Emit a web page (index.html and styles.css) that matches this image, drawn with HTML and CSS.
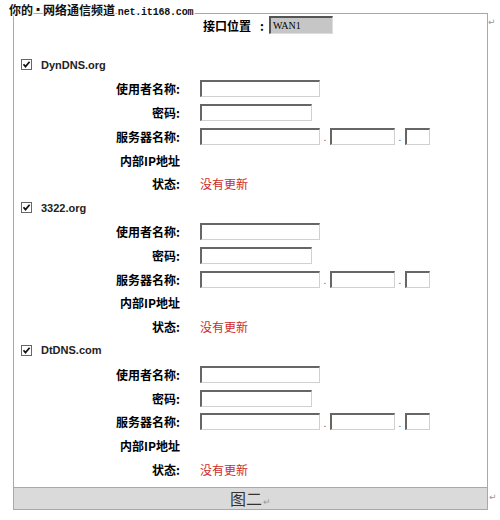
FILE: index.html
```html
<!DOCTYPE html>
<html lang="zh-CN">
<head>
    <meta charset="UTF-8">
    <title>动态域名设置</title>
    <link rel="stylesheet" href="styles.css">
</head>
<body>
    <div class="mark">你的<span class="dot">·</span>网络通信频道 <span class="site">net.it168.com</span></div>
    <span class="para para-top">↵</span>

    <div class="frame">
        <div class="top-row">
            <span class="top-label">接口位置</span>
            <span class="colon">:</span>
            <span class="iface">WAN1</span>
        </div>

        <div class="section">
            <div class="head">
                <svg class="check" width="11" height="11" viewBox="0 0 11 11"><rect x="0.5" y="0.5" width="10" height="10" fill="#fff" stroke="#666"/><path d="M2.5 5.2 L4.5 7.6 L8.6 2.8" fill="none" stroke="#111" stroke-width="1.7"/></svg>
                <span>DynDNS.org</span>
            </div>
            <div class="row"><label>使用者名称:</label><span class="field wide"></span></div>
            <div class="row"><label>密码:</label><span class="field pass"></span></div>
            <div class="row"><label>服务器名称:</label><span class="field wide"></span><i>.</i><span class="field mid"></span><i>.</i><span class="field tiny"></span></div>
            <div class="row"><label>内部IP地址</label></div>
            <div class="row"><label>状态:</label><span class="state">没有更新</span></div>
        </div>

        <div class="section">
            <div class="head">
                <svg class="check" width="11" height="11" viewBox="0 0 11 11"><rect x="0.5" y="0.5" width="10" height="10" fill="#fff" stroke="#666"/><path d="M2.5 5.2 L4.5 7.6 L8.6 2.8" fill="none" stroke="#111" stroke-width="1.7"/></svg>
                <span>3322.org</span>
            </div>
            <div class="row"><label>使用者名称:</label><span class="field wide"></span></div>
            <div class="row"><label>密码:</label><span class="field pass"></span></div>
            <div class="row"><label>服务器名称:</label><span class="field wide"></span><i>.</i><span class="field mid"></span><i>.</i><span class="field tiny"></span></div>
            <div class="row"><label>内部IP地址</label></div>
            <div class="row"><label>状态:</label><span class="state">没有更新</span></div>
        </div>

        <div class="section">
            <div class="head">
                <svg class="check" width="11" height="11" viewBox="0 0 11 11"><rect x="0.5" y="0.5" width="10" height="10" fill="#fff" stroke="#666"/><path d="M2.5 5.2 L4.5 7.6 L8.6 2.8" fill="none" stroke="#111" stroke-width="1.7"/></svg>
                <span>DtDNS.com</span>
            </div>
            <div class="row"><label>使用者名称:</label><span class="field wide"></span></div>
            <div class="row"><label>密码:</label><span class="field pass"></span></div>
            <div class="row"><label>服务器名称:</label><span class="field wide"></span><i>.</i><span class="field mid"></span><i>.</i><span class="field tiny"></span></div>
            <div class="row"><label>内部IP地址</label></div>
            <div class="row"><label>状态:</label><span class="state">没有更新</span></div>
        </div>

        <div class="caption">图二<span class="para-in">↵</span></div>
    </div>
    <span class="para para-bottom">↵</span>
</body>
</html>
```
FILE: styles.css
```css
body {
    margin: 0;
    background: #fff;
    font-family: "Noto Sans CJK SC", sans-serif;
    color: #000;
    position: relative;
    width: 500px;
    height: 520px;
}
.mark {
    position: absolute;
    left: 9px;
    top: 2px;
    font-size: 12px;
    font-weight: bold;
    line-height: 16px;
    color: #111;
    text-shadow: 1px 0 0 #fff, -1px 0 0 #fff, 0 1px 0 #fff, 0 -1px 0 #fff, 1px 1px 0 #fff, -1px -1px 0 #fff, 1px -1px 0 #fff, -1px 1px 0 #fff;
    z-index: 2;
}
.dot {
    font-family: "DejaVu Sans", sans-serif;
    font-size: 16px;
    margin: 0 2px;
}
.site {
    font-family: "Liberation Mono", monospace;
    font-size: 10px;
    letter-spacing: -0.2px;
}
.para {
    position: absolute;
    font-size: 9px;
    color: #999;
    font-family: "DejaVu Sans", sans-serif;
}
.para-top {
    left: 488px;
    top: 17px;
}
.para-bottom {
    left: 489px;
    top: 492px;
}
.frame {
    margin: 13px 0 0 13px;
    width: 475px;
    box-sizing: border-box;
    border: 1px solid #a9a9a4;
}
.top-row {
    display: flex;
    align-items: center;
    height: 22px;
    padding-left: 189px;
    margin-bottom: 17px;
    font-size: 12px;
    font-weight: bold;
}
.colon {
    margin: 0 5px 0 9px;
}
.iface {
    width: 59px;
    height: 15px;
    background: #c6c6c6;
    border-top: 2px solid #555;
    border-left: 2px solid #555;
    border-bottom: 1px solid #ddd;
    border-right: 1px solid #ddd;
    font-family: "Liberation Serif", serif;
    font-weight: normal;
    font-size: 10px;
    line-height: 15px;
    padding-left: 2px;
}
.head {
    display: flex;
    align-items: center;
    height: 23.8px;
    padding-left: 7px;
    font-family: "Liberation Sans", sans-serif;
    font-size: 11px;
    font-weight: bold;
    color: #222;
}
.check {
    margin-right: 9px;
}
.row {
    display: flex;
    align-items: center;
    height: 23.8px;
}
.row label {
    width: 166px;
    text-align: right;
    font-size: 12px;
    font-weight: bold;
    margin-right: 20px;
}
.row i {
    font-style: normal;
    font-size: 10px;
    color: #666;
    width: 10px;
    text-align: center;
    align-self: flex-end;
    padding-bottom: 4px;
}
.field {
    height: 14px;
    background: #fff;
    border-top: 2px solid #666;
    border-left: 2px solid #666;
    border-bottom: 1px solid #d0d0d0;
    border-right: 1px solid #d0d0d0;
}
.wide {
    width: 117px;
}
.pass {
    width: 109px;
}
.mid {
    width: 62px;
}
.tiny {
    width: 22px;
}
.state {
    font-size: 12px;
    color: #cc2b2b;
}
.caption {
    margin-top: 6px;
    height: 21px;
    border-top: 1px solid #a9a9a4;
    background: #dadada;
    text-align: center;
    font-size: 16px;
    line-height: 21px;
    color: #333;
}
.para-in {
    font-size: 9px;
    color: #999;
    margin-left: 1px;
}
```
